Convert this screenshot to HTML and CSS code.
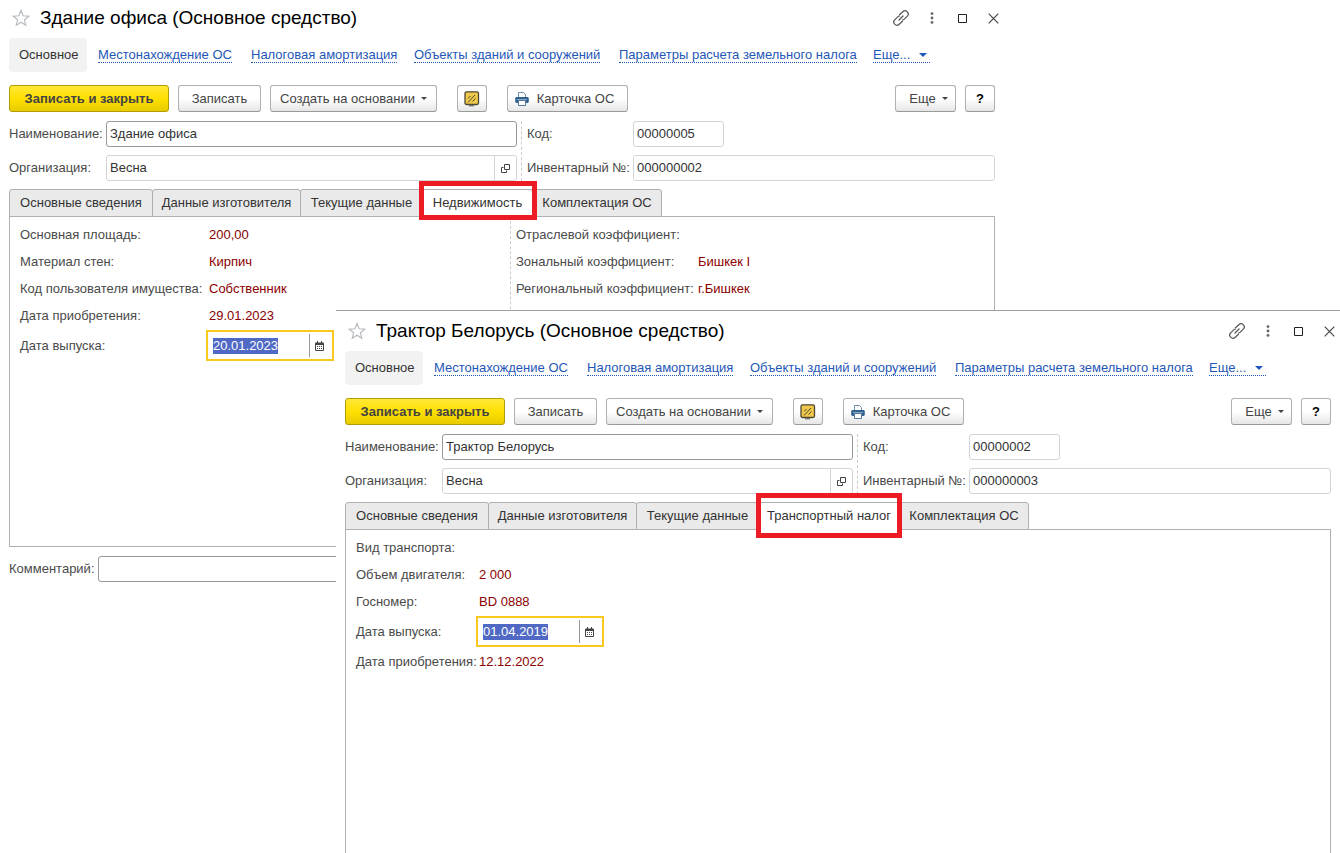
FILE: index.html
```
<!DOCTYPE html>
<html lang="ru">
<head>
<meta charset="utf-8">
<title>Основные средства</title>
<link rel="stylesheet" href="styles.css">
</head>
<body>
<svg class="sprite" aria-hidden="true">
  <symbol id="star" viewBox="0 0 18 18"><path d="M9 1.5 11.1 6.8 16.8 7.2 12.4 10.8 13.8 16.3 9 13.2 4.2 16.3 5.6 10.8 1.2 7.2 6.9 6.8Z" fill="none" stroke="#b4b9bf" stroke-width="1.1"/></symbol>
  <symbol id="link" viewBox="0 0 16 16"><g fill="none" stroke="#555" stroke-width="1.2" stroke-linecap="round"><path d="M6.500 4.800 9.800 1.700C11.200.4 13 .5 14.300 1.800s1.300 3.100 0 4.400L11.300 9.200C10.800 9.700 10.200 10 9.500 10"/><path d="M9.500 11.200 6.200 14.300C4.800 15.600 3 15.500 1.700 14.200S.4 11.100 1.700 9.800L4.700 6.800C5.200 6.300 5.800 6 6.500 6"/><path d="M6 10 10 6"/></g></symbol>
  <symbol id="dots" viewBox="0 0 4 12"><g fill="#666"><circle cx="2" cy="1.6" r="1.4"/><circle cx="2" cy="6" r="1.4"/><circle cx="2" cy="10.4" r="1.4"/></g></symbol>
  <symbol id="max" viewBox="0 0 9 9"><path d="M.5.5h8v8h-8z" fill="none" stroke="#222"/></symbol>
  <symbol id="close" viewBox="0 0 11 11"><path d="M.7.7 10.3 10.3M10.3.7.7 10.3" stroke="#444" stroke-width="1.2"/></symbol>
  <symbol id="caret" viewBox="0 0 8 4"><path d="M0 0h8L4 4z" fill="currentColor"/></symbol>
  <symbol id="board" viewBox="0 0 16 16"><path d="M5 13.500h5v2H5z" fill="#888"/><rect x="1" y=".8" width="13.5" height="12.7" rx="1.500" fill="#f0c94a" stroke="#4d4736" stroke-width="1.3"/><path d="M4 11.500 11 4M8.500 10.500 11.500 7.500M4 7.500 6.500 5" fill="none" stroke="#4d4736"/></symbol>
  <symbol id="printer" viewBox="0 0 14 14"><path d="M3.500 5.500v-5h5l2 2v3" fill="#fff" stroke="#6f8daa"/><rect x=".2" y="5" width="13.600" height="6" rx="1.400" fill="#31618d"/><path d="M2 7.500h10" stroke="#86a6c4"/><path d="M3.500 8.500h7v5h-7z" fill="#fff" stroke="#55799c"/></symbol>
  <symbol id="open" viewBox="0 0 9 9"><path d="M3.500.5h5v5h-5zM2.500 3.500h-2v5h5v-2" fill="none" stroke="#444"/></symbol>
  <symbol id="calendar" viewBox="0 0 9 10"><path d="M1 1.500h7a1 1 0 0 1 1 1V9a1 1 0 0 1-1 1H1a1 1 0 0 1-1-1V2.500a1 1 0 0 1 1-1z" fill="#444"/><path d="M1 4h7v5H1z" fill="#fff"/><path d="M2 5.500h5.500M2 7.500h5.500" stroke="#444" stroke-dasharray="1 1"/><path d="M2.500 0v2M6.500 0v2" stroke="#444"/></symbol>
</svg>
<main class="desktop">
  <section class="window window-back">
    <header class="titlebar">
      <button class="plain" aria-label="В избранное"><svg class="i18"><use href="#star"/></svg></button>
      <h1>Здание офиса (Основное средство)</h1>
      <div class="window-controls">
        <button class="plain" aria-label="Ссылка"><svg class="i16"><use href="#link"/></svg></button>
        <button class="plain" aria-label="Меню"><svg class="i12"><use href="#dots"/></svg></button>
        <button class="plain" aria-label="Развернуть"><svg class="i9"><use href="#max"/></svg></button>
        <button class="plain" aria-label="Закрыть"><svg class="i11"><use href="#close"/></svg></button>
      </div>
    </header>
    <nav class="sections">
      <span class="current">Основное</span>
      <span><a href="#">Местонахождение ОС</a></span>
      <span><a href="#">Налоговая амортизация</a></span>
      <span><a href="#">Объекты зданий и сооружений</a></span>
      <span><a href="#">Параметры расчета земельного налога</a></span>
      <span><a href="#" class="more-link">Еще... <svg class="caret"><use href="#caret"/></svg></a></span>
    </nav>
    <div class="toolbar">
      <div class="group">
        <button class="btn primary">Записать и закрыть</button>
        <button class="btn save">Записать</button>
        <button class="btn create">Создать на основании <svg class="caret small"><use href="#caret"/></svg></button>
      </div>
      <button class="btn square" aria-label="Доска"><svg class="i16"><use href="#board"/></svg></button>
      <button class="btn card"><svg class="i14"><use href="#printer"/></svg>Карточка ОС</button>
      <div class="group end">
        <button class="btn more">Еще <svg class="caret small"><use href="#caret"/></svg></button>
        <button class="btn square help">?</button>
      </div>
    </div>
    <div class="form">
      <div class="form-side">
        <div class="field"><label for="a-name">Наименование:</label><input id="a-name" class="box strong" value="Здание офиса"></div>
        <div class="field"><label for="a-org">Организация:</label><div class="box combo"><input id="a-org" value="Весна"><button class="plain" aria-label="Открыть"><svg class="i9"><use href="#open"/></svg></button></div></div>
      </div>
      <div class="form-side second">
        <div class="field"><label for="a-code">Код:</label><input id="a-code" class="box code" value="00000005"></div>
        <div class="field"><label for="a-inv">Инвентарный №:</label><input id="a-inv" class="box" value="000000002"></div>
      </div>
    </div>
    <div class="tabs" role="tablist">
      <button role="tab">Основные сведения</button>
      <button role="tab">Данные изготовителя</button>
      <button role="tab">Текущие данные</button>
      <button role="tab" class="active" aria-selected="true">Недвижимость</button>
      <button role="tab">Комплектация ОС</button>
    </div>
    <div class="panel">
      <div class="details estate">
        <span>Основная площадь:</span><output>200,00</output>
        <span>Материал стен:</span><output>Кирпич</output>
        <span>Код пользователя имущества:</span><output>Собственник</output>
        <span>Дата приобретения:</span><output>29.01.2023</output>
        <label for="a-date">Дата выпуска:</label>
        <div class="date"><div class="date-text"><input id="a-date" value="20.01.2023"></div><button class="plain" aria-label="Календарь"><svg class="cal"><use href="#calendar"/></svg></button></div>
      </div>
      <div class="details factors">
        <span>Отраслевой коэффициент:</span><output></output>
        <span>Зональный коэффициент:</span><output>Бишкек I</output>
        <span>Региональный коэффициент:</span><output>г.Бишкек</output>
      </div>
    </div>
    <div class="comment"><label for="a-comment">Комментарий:</label><input id="a-comment" class="box strong"></div>
  </section>

  <section class="window window-front">
    <header class="titlebar">
      <button class="plain" aria-label="В избранное"><svg class="i18"><use href="#star"/></svg></button>
      <h1>Трактор Белорусь (Основное средство)</h1>
      <div class="window-controls">
        <button class="plain" aria-label="Ссылка"><svg class="i16"><use href="#link"/></svg></button>
        <button class="plain" aria-label="Меню"><svg class="i12"><use href="#dots"/></svg></button>
        <button class="plain" aria-label="Развернуть"><svg class="i9"><use href="#max"/></svg></button>
        <button class="plain" aria-label="Закрыть"><svg class="i11"><use href="#close"/></svg></button>
      </div>
    </header>
    <nav class="sections">
      <span class="current">Основное</span>
      <span><a href="#">Местонахождение ОС</a></span>
      <span><a href="#">Налоговая амортизация</a></span>
      <span><a href="#">Объекты зданий и сооружений</a></span>
      <span><a href="#">Параметры расчета земельного налога</a></span>
      <span><a href="#" class="more-link">Еще... <svg class="caret"><use href="#caret"/></svg></a></span>
    </nav>
    <div class="toolbar">
      <div class="group">
        <button class="btn primary">Записать и закрыть</button>
        <button class="btn save">Записать</button>
        <button class="btn create">Создать на основании <svg class="caret small"><use href="#caret"/></svg></button>
      </div>
      <button class="btn square" aria-label="Доска"><svg class="i16"><use href="#board"/></svg></button>
      <button class="btn card"><svg class="i14"><use href="#printer"/></svg>Карточка ОС</button>
      <div class="group end">
        <button class="btn more">Еще <svg class="caret small"><use href="#caret"/></svg></button>
        <button class="btn square help">?</button>
      </div>
    </div>
    <div class="form">
      <div class="form-side">
        <div class="field"><label for="b-name">Наименование:</label><input id="b-name" class="box strong" value="Трактор Белорусь"></div>
        <div class="field"><label for="b-org">Организация:</label><div class="box combo"><input id="b-org" value="Весна"><button class="plain" aria-label="Открыть"><svg class="i9"><use href="#open"/></svg></button></div></div>
      </div>
      <div class="form-side second">
        <div class="field"><label for="b-code">Код:</label><input id="b-code" class="box code" value="00000002"></div>
        <div class="field"><label for="b-inv">Инвентарный №:</label><input id="b-inv" class="box" value="000000003"></div>
      </div>
    </div>
    <div class="tabs wide" role="tablist">
      <button role="tab">Основные сведения</button>
      <button role="tab">Данные изготовителя</button>
      <button role="tab">Текущие данные</button>
      <button role="tab" class="active" aria-selected="true">Транспортный налог</button>
      <button role="tab">Комплектация ОС</button>
    </div>
    <div class="panel">
      <div class="details transport">
        <span>Вид транспорта:</span><output></output>
        <span>Объем двигателя:</span><output>2 000</output>
        <span>Госномер:</span><output>BD 0888</output>
        <label for="b-date">Дата выпуска:</label>
        <div class="date"><div class="date-text"><input id="b-date" value="01.04.2019"></div><button class="plain" aria-label="Календарь"><svg class="cal"><use href="#calendar"/></svg></button></div>
        <span>Дата приобретения:</span><output>12.12.2022</output>
      </div>
    </div>
  </section>
</main>
</body>
</html>
```
FILE: styles.css
```
* { box-sizing: border-box; }
body {
  margin: 0;
  background: #fff;
  color: #4a4a4a;
  font: 13px/16px "Liberation Sans", Arial, sans-serif;
}
button, input { font: inherit; color: inherit; margin: 0; }
svg { display: block; flex: none; }
.sprite { position: absolute; width: 0; height: 0; }
.i18 { width: 18px; height: 18px; }
.i16 { width: 16px; height: 16px; }
.i14 { width: 14px; height: 14px; }
.i12 { width: 4px; height: 12px; }
.i11 { width: 11px; height: 11px; }
.i9 { width: 9px; height: 9px; }
.cal { width: 9px; height: 10px; }
.caret { width: 8px; height: 4px; }
.caret.small { width: 6px; height: 3px; }
.plain {
  display: flex;
  align-items: center;
  justify-content: center;
  padding: 0;
  border: 0;
  background: none;
}

.desktop { position: relative; min-height: 100vh; overflow: hidden; }
.window { display: flex; flex-direction: column; padding: 0 9px; background: #fff; }
.window-back { margin-right: 336px; }
.window-front {
  position: absolute;
  top: 310px;
  right: 0;
  bottom: 0;
  left: 336px;
  padding-top: 2px;
  border-top: 1px solid #a0a0a0;
}

.titlebar { display: flex; align-items: center; height: 38px; padding: 0 0 2px 3px; }
h1 { flex: 1; margin: 0 0 0 10px; color: #000; font-size: 19px; font-weight: 400; line-height: 22px; }
.window-controls { display: flex; margin-right: -14px; }
.window-controls button { width: 31px; height: 24px; }

.sections {
  display: grid;
  grid-template-columns: 79px 153px 163px 205px 254px auto;
  height: 34px;
  white-space: nowrap;
}
.sections > span { display: flex; align-items: center; padding-left: 10px; }
.sections .current { width: 78px; border-radius: 4px; background: #f2f2f2; color: #333; }
.sections a {
  border-bottom: 1px dotted #1f57b8;
  color: #1f57b8;
  line-height: 14px;
  text-decoration: none;
}
.more-link { display: flex; align-items: center; gap: 9px; padding-right: 3px; }

.toolbar { display: flex; gap: 20px; margin-top: 13px; }
.group { display: flex; gap: 9px; }
.end { margin-left: auto; }
.btn {
  display: flex;
  align-items: center;
  justify-content: center;
  height: 27px;
  padding: 0;
  border: 1px solid #b0b0b0;
  border-bottom-color: #999;
  border-radius: 3px;
  background: linear-gradient(#fff 50%, #e6e6e6);
  color: #444;
  white-space: nowrap;
}
.primary {
  width: 160px;
  border-color: #b39b00;
  background: linear-gradient(#ffe838, #ffe000 50%, #e8cb00);
  font-weight: 700;
}
.save { width: 83px; }
.create { width: 167px; gap: 6px; }
.square { width: 30px; }
.card { width: 121px; gap: 8px; padding-right: 6px; }
.more { width: 61px; gap: 6px; padding-left: 6px; }
.help { color: #000; font-weight: 700; }

.form { display: grid; grid-template-columns: 508fr 474fr; gap: 4px; margin-top: 9px; }
.form-side { display: flex; flex-direction: column; gap: 8px; }
.second { padding-left: 5px; border-left: 1px dashed #ccc; }
.field { display: grid; grid-template-columns: 97px 1fr; align-items: center; }
.second .field { grid-template-columns: 106px 1fr; }
.field label { white-space: nowrap; }
.box {
  width: 100%;
  height: 26px;
  padding: 0 3px 2px;
  border: 1px solid #d4d4d4;
  border-radius: 3px;
  background: #fff;
  color: #333;
}
.strong { border-color: #999; }
.code { width: 91px; }
.combo { display: flex; padding: 0 0 0 3px; }
.combo input { flex: 1; min-width: 0; padding: 0; border: 0; background: none; }
.combo button { width: 22px; border-left: 1px solid #d4d4d4; }

.tabs {
  display: grid;
  grid-template-columns: 143px 148px 122px 110px 129px;
  margin-top: 8px;
}
.tabs.wide { grid-template-columns: 143px 148px 122px 141px 129px; }
.tabs button {
  position: relative;
  height: 28px;
  margin-right: -1px;
  padding: 0;
  border: 1px solid #b0b0b0;
  border-radius: 3px 3px 0 0;
  background: #eaeaea;
  color: #333;
  white-space: nowrap;
}
.tabs .active { z-index: 1; border-bottom-color: #fff; background: #fff; }
.tabs .active::after {
  content: "";
  position: absolute;
  inset: -9px -5px -4px -4px;
  border: 5px solid #ed1c24;
}
.tabs.wide .active::after { inset: -10px -3px -9px -3px; }

.panel {
  display: grid;
  grid-template-columns: 490fr 484fr;
  align-items: start;
  min-height: 331px;
  margin-top: -1px;
  padding: 4px 0 0 10px;
  border: 1px solid #b0b0b0;
}
.window-front .panel { flex: 1; min-height: 0; border-bottom: 0; }
.details { display: grid; grid-auto-rows: minmax(27px, auto); align-items: center; white-space: nowrap; }
.estate { grid-template-columns: 186px 1fr; }
.transport { grid-template-columns: 120px 1fr; }
.factors {
  grid-template-columns: 179px 1fr;
  align-content: start;
  height: 100%;
  padding-left: 5px;
  border-left: 1px dashed #ccc;
}
output { padding-left: 3px; color: #8b0000; }
.date {
  display: flex;
  width: 128px;
  height: 31px;
  margin: 1px 0;
  padding: 2px 0;
  border: 2px solid #f8c81c;
}
.date-text { display: flex; align-items: center; width: 102px; padding-left: 5px; border-right: 1px solid #999; }
.date input { width: 65px; height: 16px; padding: 0; border: 0; background: #5069c4; color: #fff; }
.date button { width: 19px; }

.comment { display: grid; grid-template-columns: 89px 1fr; align-items: center; margin-top: 9px; }
```
